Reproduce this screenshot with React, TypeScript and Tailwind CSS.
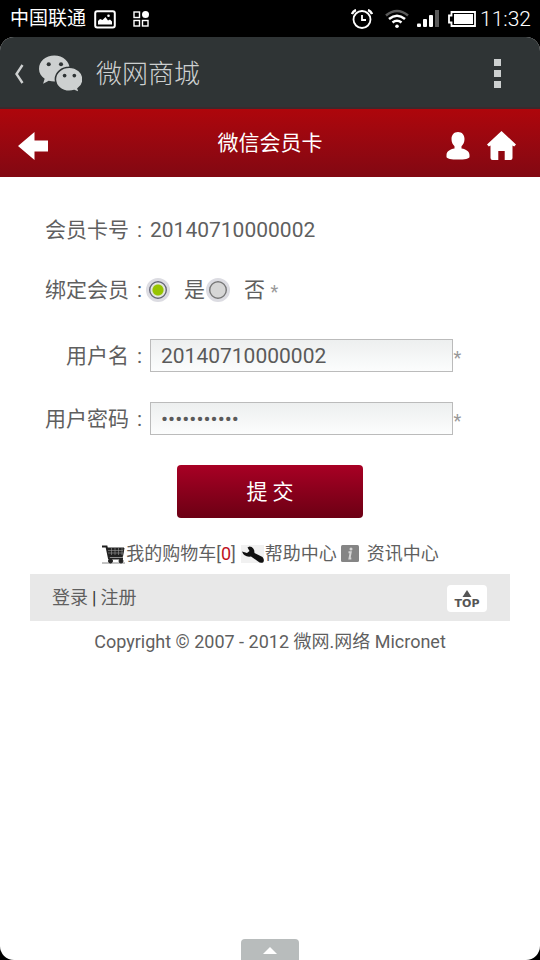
import type { ReactNode } from "react";

function StatusBar() {
  return (
    <div className="flex h-[37px] items-center justify-between pt-px pr-[9px] pl-[10px] text-white">
      <div className="flex items-center">
        <span className="text-[19px] leading-6">中国联通</span>
        <svg className="ml-2 h-[19px] w-[22px]" viewBox="0 0 22 19" fill="none">
          <rect x="1.2" y="1.2" width="19.6" height="16.2" rx="2" stroke="currentColor" strokeWidth="2" />
          <path d="M4 14.500v-3.500l2-2 2.500 1 3-3 2.500 3.500 2-1 2 2v3z" fill="currentColor" />
          <circle cx="14.5" cy="5.8" r="1.3" fill="currentColor" />
        </svg>
        <svg className="ml-[17px] h-4 w-4" viewBox="0 0 16 16" fill="none" stroke="currentColor" strokeWidth="1.4">
          <rect x="1" y="1" width="5.500" height="5.500" />
          <rect x="1" y="9.500" width="5.500" height="5.500" />
          <rect x="9.500" y="9.500" width="5.500" height="5.500" />
          <circle cx="12.5" cy="3.5" r="3.5" fill="currentColor" stroke="none" />
        </svg>
      </div>
      <div className="flex items-center">
        <svg className="h-5 w-[22px]" viewBox="0 0 22 20" fill="none" stroke="currentColor" strokeWidth="1.8">
          <circle cx="11" cy="10.5" r="8.500" />
          <path d="M11 6v5h4" />
          <path d="M1 5q1-3 4-4M21 5q-1-3-4-4" strokeWidth="2.4" />
        </svg>
        <svg className="ml-3 h-5 w-6" viewBox="0 0 24 20" fill="none" stroke="currentColor" strokeWidth="2.6">
          <path d="M1 6.5Q12-2.5 23 6.5" stroke="#5a5a5a" />
          <path d="M4 10q8-6.5 16 0" />
          <path d="M7.500 13.500q4.500-3.500 9 0" />
          <circle cx="12" cy="17.300" r="1.8" fill="currentColor" stroke="none" />
        </svg>
        <svg className="ml-2 h-[18px] w-[22px]" viewBox="0 0 22 18" fill="currentColor">
          <rect x="0" y="13.500" width="4" height="3.500" rx="1" />
          <rect x="6" y="9" width="4" height="8" rx="1" />
          <rect x="12" y="5" width="4" height="12" rx="1" />
          <rect x="18" y="0" width="4" height="17" fill="#5a5a5a" />
        </svg>
        <svg className="ml-[9px] h-4 w-7" viewBox="0 0 28 16" fill="none">
          <path d="M3.500 1h23.500v14H3.500v-3.500H1V4.500h2.500z" stroke="currentColor" strokeWidth="1.8" />
          <rect x="6" y="3" width="19" height="10" fill="currentColor" />
        </svg>
        <span className="ml-1 text-[21px] leading-6 font-light">11:32</span>
      </div>
    </div>
  );
}

function WechatLogo() {
  return (
    <svg className="h-[38px] w-11" viewBox="0 1 43 36">
      <path
        d="M16 1C7.500 1 1 6.500 1 14c0 4 2.100 7.300 5.500 9.600L5 28.500l5.500-2.800c1.800.5 3.600.7 5.500.7 8.500 0 15-5.300 15-12.400S24.500 1 16 1z"
        fill="#cdd0d0"
      />
      <path
        d="M30.500 12.500C23 12.500 17 17.800 17 24.200s6 11.700 13.500 11.700c1.800 0 3.500-.3 5-.8l5 2.200-1.400-4c3-2.100 4.900-5.400 4.900-9.200 0-6.400-6-11.700-13.500-11.700z"
        fill="#cdd0d0"
        stroke="#2f3435"
        strokeWidth="1.500"
      />
      <g fill="#2f3435">
        <circle cx="10.500" cy="9.500" r="2" />
        <circle cx="22.500" cy="9.500" r="2" />
        <circle cx="26" cy="20.500" r="1.800" />
        <circle cx="35.500" cy="20.500" r="1.800" />
      </g>
    </svg>
  );
}

function AppBar() {
  return (
    <header className="flex h-[72px] items-center border-b-2 border-[#3a2a2d] bg-[#2f3435] pt-[3px] pr-[39px] pl-[14px] text-[#cdd0d0]">
      <button type="button" aria-label="返回" className="flex items-center">
        <svg className="h-5 w-[10px]" viewBox="0 0 10 20" fill="none" stroke="currentColor" strokeWidth="2.400">
          <path d="M8.500 1L2.500 10l6 9" />
        </svg>
        <span className="ml-[14px]">
          <WechatLogo />
        </span>
      </button>
      <h1 className="ml-[14px] text-[26px] leading-8 font-light">微网商城</h1>
      <button type="button" aria-label="更多" className="ml-auto flex flex-col gap-1">
        <span className="h-[7px] w-[7px] bg-current" />
        <span className="h-[7px] w-[7px] bg-current" />
        <span className="h-[7px] w-[7px] bg-current" />
      </button>
    </header>
  );
}

function PageBar() {
  return (
    <nav className="grid h-[68px] grid-cols-[1fr_auto_1fr] items-center bg-linear-to-b from-[#ae060b] to-[#820812] px-[18px] text-white">
      <a href="#back" aria-label="后退">
        <svg className="mt-[6px] h-7 w-[31px]" viewBox="0 0 31 28" fill="currentColor">
          <path d="M0 14L16.500 0v8.500H30v11H16.500V28z" />
        </svg>
      </a>
      <h2 className="text-[21px] leading-8">微信会员卡</h2>
      <div className="flex items-center justify-end gap-[17px] pr-[6px]">
        <a href="#member" aria-label="会员">
          <svg className="mt-[6px] h-7 w-6" viewBox="0 0 24 28" fill="currentColor">
            <path d="M12 0c4 0 6.500 2.800 6.500 7 0 3.200-1.200 5.500-3 7.200v2.300c4.500.8 8 3 8 6.500v2c0 1.700-5 2.600-11.500 2.600S.5 26.700.5 25v-2c0-3.500 3.500-5.700 8-6.500v-2.300C6.700 12.500 5.500 10.200 5.500 7c0-4.200 2.500-7 6.500-7z" />
          </svg>
        </a>
        <a href="#home" aria-label="首页">
          <svg className="mt-1 h-[29px] w-[29px]" viewBox="0 0 29 29" fill="currentColor">
            <path d="M14.500 0L29 13.500l-1.800 2-1.700-1V27q0 2-2 2h-5.800v-9h-6.400v9H5.500q-2 0-2-2V14.500l-1.700 1-1.800-2z" />
          </svg>
        </a>
      </div>
    </nav>
  );
}

function Colon() {
  return <span className="inline-block w-[21px] text-center">:</span>;
}

function Label({ htmlFor, children }: { htmlFor: string; children: ReactNode }) {
  return (
    <label htmlFor={htmlFor} className="w-30 shrink-0 text-right">
      {children}
      <Colon />
    </label>
  );
}

function Required() {
  return <span className="w-[9px] pt-1 text-center text-[18px] leading-6 text-[#999]">*</span>;
}

const radioClass =
  "h-6 w-6 shrink-0 appearance-none rounded-full border-3 border-[#dcdce2] bg-[#d6d6d6] bg-[radial-gradient(circle,#d6d6d6_7px,#777_8px,#777_9px,#d6d6d6_10px)] checked:bg-[radial-gradient(circle,#97c400_5px,#dde3cf_6px,#e6e8e6_7px,#667_8px,#667_9px,#dcdce2_10px)]";

const inputClass =
  "h-[33px] min-w-0 flex-1 border border-[#bbb] bg-linear-to-b from-[#edefef] to-[#fcfdfd] px-[10px] text-[21px] text-[#5a5a5a] outline-none";

function MemberForm() {
  return (
    <form className="pt-[37px] text-[21px] leading-8" onSubmit={(e) => e.preventDefault()}>
      <div className="flex items-center">
        <span className="w-30 shrink-0 text-right">
          会员卡号
          <Colon />
        </span>
        <span>20140710000002</span>
      </div>

      <div className="mt-7 flex items-center" role="radiogroup" aria-labelledby="bind-label">
        <span id="bind-label" className="w-30 shrink-0 text-right">
          绑定会员
          <Colon />
        </span>
        <label className="-ml-1 flex items-center gap-[14px]">
          <input type="radio" name="bind" defaultChecked className={radioClass} />是
        </label>
        <label className="ml-px flex items-center gap-[14px]">
          <input type="radio" name="bind" className={radioClass} />否
        </label>
        <span className="ml-[5px] flex">
          <Required />
        </span>
      </div>

      <div className="mt-[33px] flex items-center pr-12">
        <Label htmlFor="username">用户名</Label>
        <input id="username" type="text" defaultValue="20140710000002" className={inputClass} />
        <Required />
      </div>

      <div className="mt-[30px] flex items-center pr-12">
        <Label htmlFor="password">用户密码</Label>
        <input id="password" type="password" defaultValue="12345678901" className={inputClass} />
        <Required />
      </div>

      <button
        type="submit"
        className="mx-auto mt-[30px] block h-[53px] w-[186px] rounded bg-linear-to-b from-[#a80024] to-[#6c0014] text-white"
      >
        提 交
      </button>
    </form>
  );
}

function QuickLinks() {
  return (
    <div className="mt-[22px] flex items-center justify-center text-[18px] leading-7">
      <a href="#cart" className="flex items-center">
        <svg className="h-[19px] w-[25px]" viewBox="0 0 25 19" fill="none" stroke="#222">
          <path d="M1 1.500h4.500L8 13.500h14" strokeWidth="2" />
          <path d="M6 3h17l-1.500 8.500H8z" fill="#222" />
          <path d="M7 5.500h15M7 8h15M10.500 3v7M14 3v7M17.500 3v7M21 3v7" stroke="#999" strokeWidth=".6" />
          <path d="M1 18h23" stroke="#888" />
          <circle cx="9.500" cy="16" r="2" fill="#222" />
          <circle cx="20" cy="16" r="2" fill="#222" />
        </svg>
        <span>我的购物车</span>
      </a>
      <span>
        [<span className="text-[#c0121c]">0</span>]
      </span>
      <a href="#help" className="ml-1 flex items-center">
        <svg className="h-[19px] w-[25px]" viewBox="0 0 25 19">
          <rect x="1" width="23" height="18" fill="#f1f1f1" />
          <path
            d="M2 6.500l5 1.500 2.500-2L7.500 2.500l2-1q5 .5 5 6.500L22.500 12q2.500 3 .5 5.500-3 .7-4.500-.7L11 11.500q-7 1-9-5z"
            fill="#111"
          />
        </svg>
        <span>帮助中心</span>
      </a>
      <a href="#news" className="ml-1 flex items-center">
        <svg className="h-[18px] w-[18px]" viewBox="0 0 18 18">
          <rect width="18" height="17" rx="1.500" fill="#858585" />
          <circle cx="10" cy="4" r="1.500" fill="#d5d5d5" />
          <path d="M7.500 7.200h2.200l-1.200 6.300h1.800" fill="none" stroke="#d5d5d5" strokeWidth="2" />
        </svg>
        <span className="ml-2">资讯中心</span>
      </a>
    </div>
  );
}

function Footer() {
  return (
    <footer>
      <div className="mt-[6px] flex h-[47px] items-center justify-between bg-[#e8e8e8] pr-[23px] pl-[22px] text-[18px] leading-7">
        <div className="flex gap-1">
          <a href="#login">登录</a>
          <span className="text-[#333]">|</span>
          <a href="#register">注册</a>
        </div>
        <a href="#top" className="mt-[2px] flex h-[27px] w-10 flex-col items-center rounded bg-white pt-[5px]">
          <svg className="h-[7px] w-[10px] shrink-0" viewBox="0 0 10 7" fill="#555">
            <path d="M5 0l4.500 7h-9z" />
          </svg>
          <span className="font-['DejaVu_Sans',sans-serif] text-[11px] leading-[14px] font-bold text-[#555]">TOP</span>
        </a>
      </div>
      <p className="mt-[7px] text-center text-[18px] leading-7">Copyright © 2007 - 2012 微网.网络 Micronet</p>
    </footer>
  );
}

export default function App() {
  return (
    <div
      lang="zh-CN"
      className="flex min-h-screen flex-col bg-black font-[Roboto,'Noto_Sans_CJK_SC',sans-serif]"
    >
      <StatusBar />
      <div className="flex flex-1 flex-col overflow-hidden rounded-[14px] bg-white">
        <AppBar />
        <PageBar />
        <main className="px-[30px] text-[#5f5f5f]">
          <MemberForm />
          <QuickLinks />
          <Footer />
        </main>
        <button
          type="button"
          aria-label="展开"
          className="mx-auto mt-auto flex h-[21px] w-[58px] justify-center rounded-t bg-[#b8bcbc] pt-2"
        >
          <svg className="h-[7px] w-[14px]" viewBox="0 0 14 7" fill="white">
            <path d="M7 0l7 7H0z" />
          </svg>
        </button>
      </div>
    </div>
  );
}
